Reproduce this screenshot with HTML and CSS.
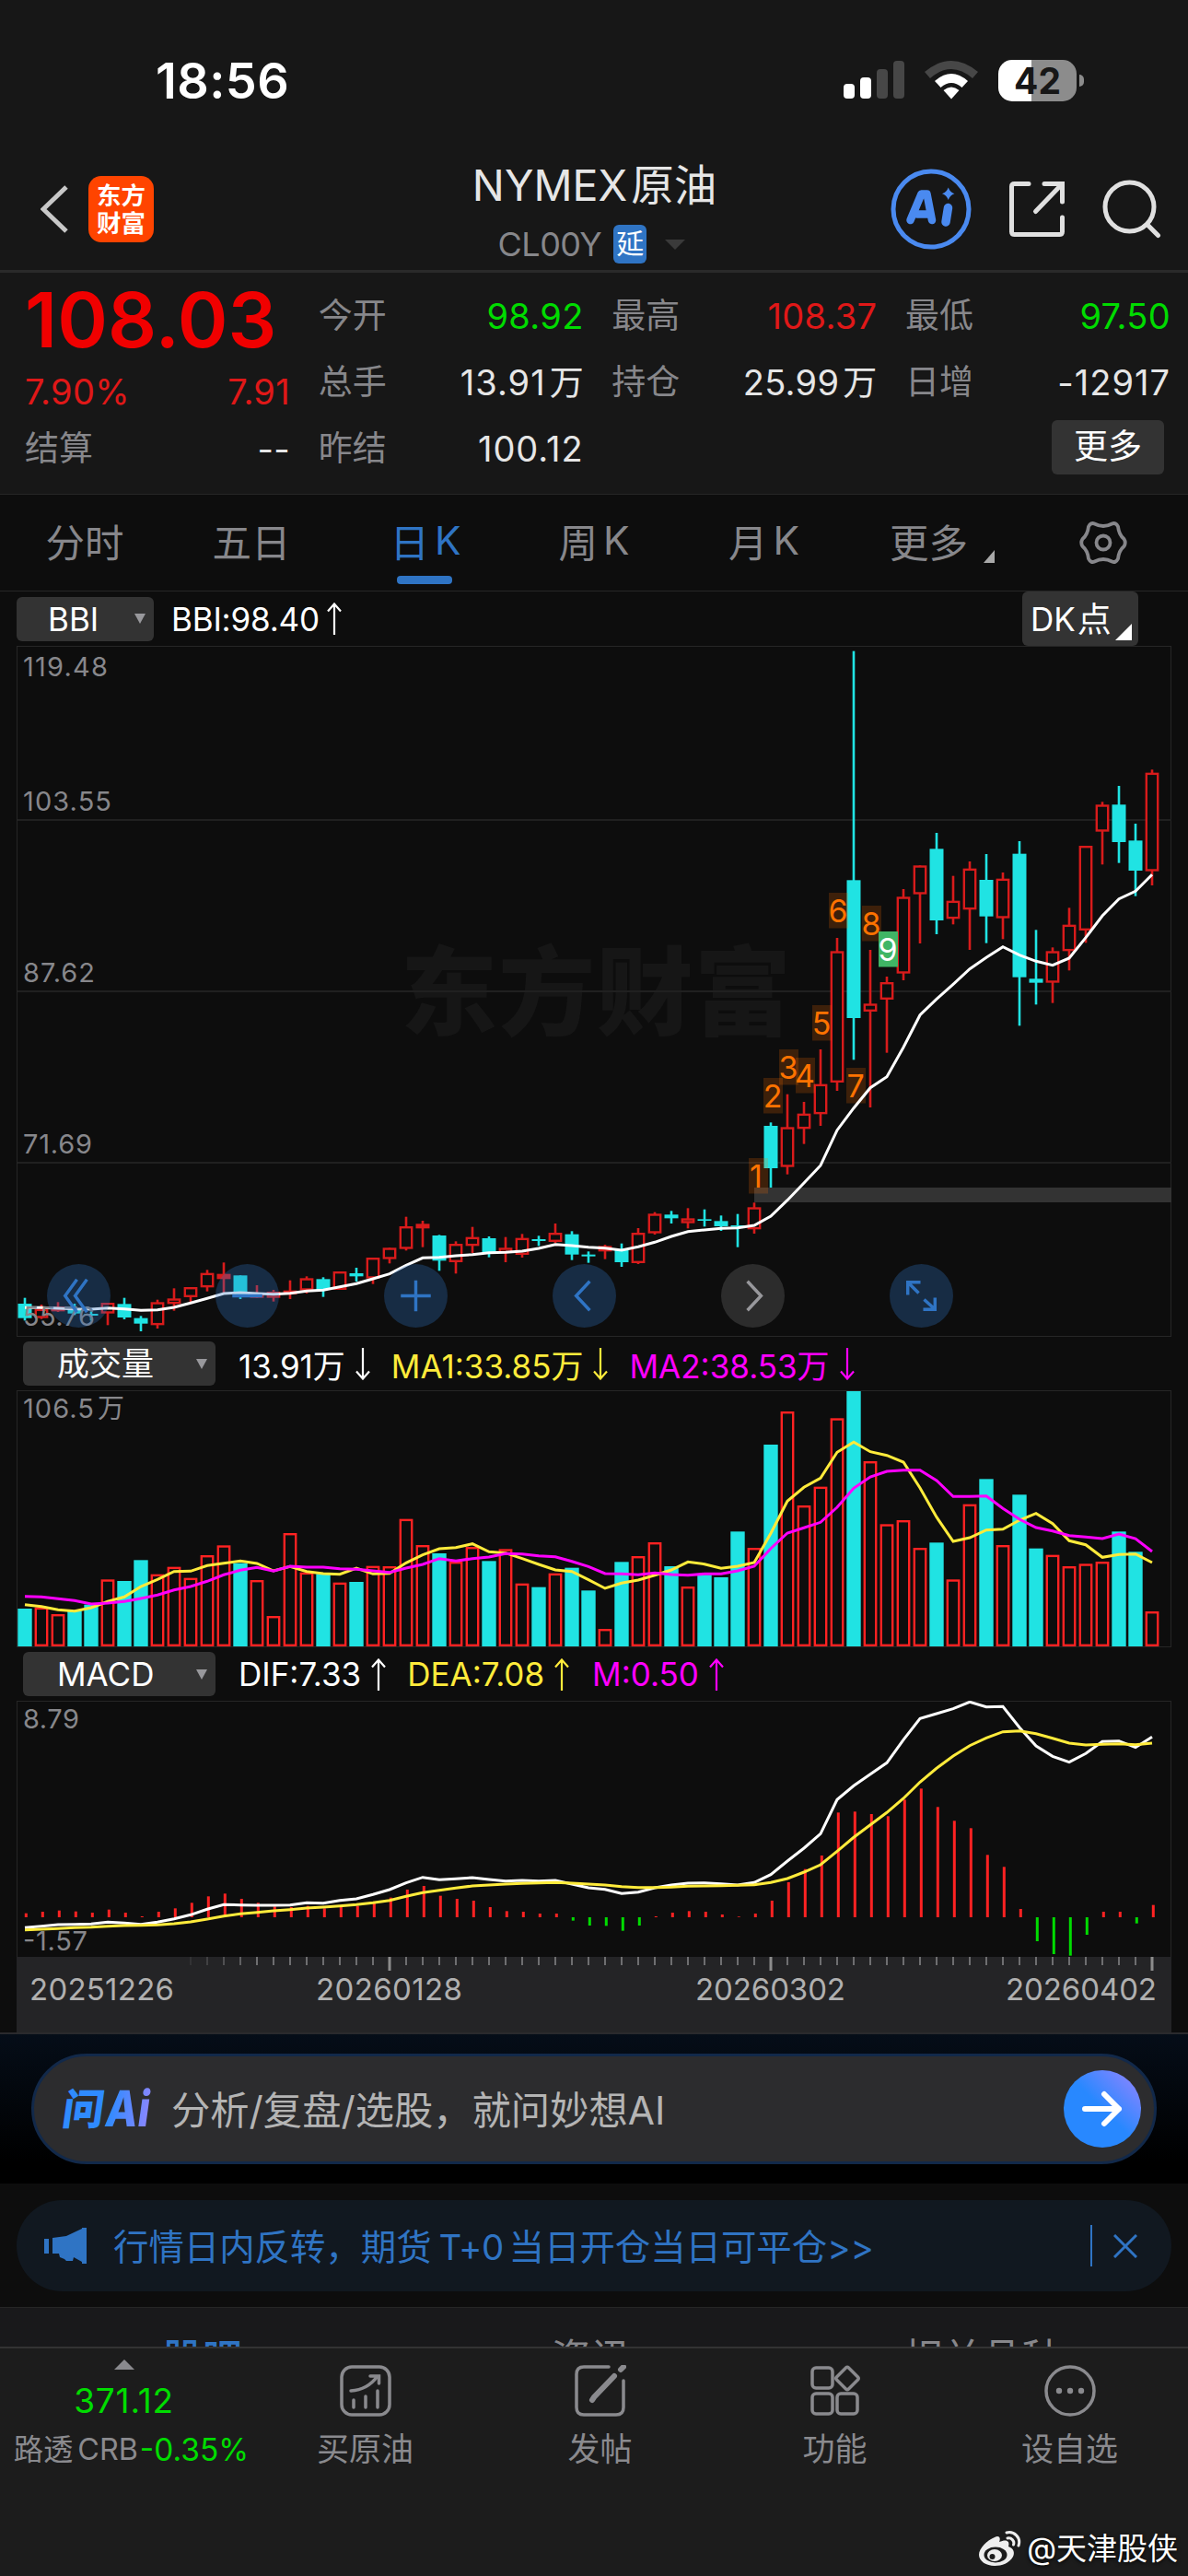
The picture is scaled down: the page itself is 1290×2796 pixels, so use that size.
FILE: index.html
```html
<!DOCTYPE html>
<html lang="zh-CN">
<head>
<meta charset="utf-8">
<title>NYMEX原油</title>
<link rel="stylesheet" href="styles.css">
</head>
<body>
<div class="status">
  <span class="clock">18:56</span>
  <span class="status-icons">
    <svg class="signal" width="66" height="42" viewBox="0 0 66 42">
      <rect x="0" y="25" width="12" height="16" rx="4" fill="#fff"/>
      <rect x="18" y="18" width="12" height="23" rx="4" fill="#fff"/>
      <rect x="36" y="9" width="12" height="32" rx="4" fill="#474747"/>
      <rect x="54" y="0" width="12" height="41" rx="4" fill="#474747"/>
    </svg>
    <svg class="wifi" width="58" height="42" viewBox="0 0 58 42">
      <path d="M0 12Q29-12 58 12L52 19Q29-1 6 19Z" fill="#474747"/>
      <path d="M11 22Q29 6 47 22L40.500 29Q29 19 17.500 29Z" fill="#fff"/>
      <path d="M20.500 32Q29 25 37.500 32L29 41.500Z" fill="#fff"/>
    </svg>
    <span class="battery"><b>42</b></span>
    <span class="battery-nub"></span>
  </span>
</div>

<header class="header">
  <div class="header-left">
    <svg width="30" height="52" viewBox="0 0 30 52"><path d="M28 2L3 26L28 50" fill="none" stroke="#c8c8c8" stroke-width="5"/></svg>
    <span class="logo"><span>东方</span><span>财富</span></span>
  </div>
  <div class="header-title">
    <h1>NYMEX<span>原油</span></h1>
    <div class="code"><span class="code-text">CL00Y</span><span class="delay">延</span><i class="caret"></i></div>
  </div>
  <div class="header-right">
    <svg width="88" height="88" viewBox="0 0 88 88">
      <circle cx="44" cy="44" r="41" fill="none" stroke="#4a8af0" stroke-width="5"/>
      <path d="M21.500 56L33.500 27.500H39.500L45 56M29 49.500H42" fill="none" stroke="#4a8af0" stroke-width="8.500" stroke-linejoin="round" stroke-linecap="round"/>
      <path d="M62.500 42.500L60 58" stroke="#4a8af0" stroke-width="9.500" stroke-linecap="round"/>
      <path d="M62.700 20.500Q64.500 25.500 69.500 27.300Q64.500 29 62.700 34Q61 29 56 27.300Q61 25.500 62.700 20.500Z" fill="#4a8af0"/>
    </svg>
    <svg width="62" height="62" viewBox="0 0 62 62" fill="none" stroke="#e0e0e0" stroke-width="5" stroke-linecap="round">
      <path d="M22 3.500H6.500Q3.500 3.500 3.500 6.500V55.500Q3.500 58.500 6.500 58.500H55.500Q58.500 58.500 58.500 55.500V40"/>
      <path d="M39 3.500H58.500V23M57 5L29.500 33.500"/>
    </svg>
    <svg width="64" height="64" viewBox="0 0 64 64" fill="none" stroke="#e0e0e0" stroke-width="5" stroke-linecap="round">
      <circle cx="29.500" cy="29.500" r="26.500"/><path d="M49 49L60.500 60.500"/>
    </svg>
  </div>
</header>

<section class="quote">
  <div class="col">
    <div class="price">108.03</div>
    <div class="row change"><span>7.90%</span><span>7.91</span></div>
    <div class="row"><label>结算</label><span>--</span></div>
  </div>
  <div class="col">
    <div class="row"><label>今开</label><span class="down">98.92</span></div>
    <div class="row"><label>总手</label><span class="wide">13.91<em>万</em></span></div>
    <div class="row"><label>昨结</label><span class="wide">100.12</span></div>
  </div>
  <div class="col">
    <div class="row"><label>最高</label><span class="up">108.37</span></div>
    <div class="row"><label>持仓</label><span>25.99<em>万</em></span></div>
  </div>
  <div class="col">
    <div class="row"><label>最低</label><span class="down">97.50</span></div>
    <div class="row"><label>日增</label><span class="wide">-12917</span></div>
    <div class="row row-more"><button class="more">更多</button></div>
  </div>
</section>

<nav class="tabs">
  <a>分时</a><a>五日</a><a class="active">日<em>K</em></a><a>周<em>K</em></a><a>月<em>K</em></a><a class="tab-more">更多<i class="corner"></i></a>
  <a class="gear"><svg width="54" height="50" viewBox="-27 -25 54 50" fill="none" stroke="#87878b" stroke-width="3.800">
    <path d="M-9.500-20.500Q0-15.500 9.500-20.500Q13.500-22.500 16-17.500Q17-8.500 22.500-4Q25 0 22.500 4Q17 8.500 16 17.500Q13.500 22.500 9.500 20.500Q0 15.500-9.500 20.500Q-13.500 22.500-16 17.500Q-17 8.500-22.500 4Q-25 0-22.500-4Q-17-8.500-16-17.500Q-13.500-22.500-9.500-20.500Z"/>
    <circle r="7.500"/></svg></a>
</nav>

<section class="indicator first">
  <button class="pick short">BBI<i class="caret"></i></button>
  <span class="val white bbi">BBI:98.40</span><svg class="arr white"><use href="#up"/></svg>
  <button class="dk">DK<span>点</span><i class="corner"></i></button>
</section>
<div class="chart-wrap">
  <svg class="chart" id="k-chart" width="1290" height="750" viewBox="0 701 1290 750"></svg>
  <div class="controls">
    <span><svg viewBox="-35 -35 70 70"><path d="M-2-18L-15 0L-2 18M9-18L-4 0L9 18"/></svg></span>
    <span><svg viewBox="-35 -35 70 70"><path d="M-16.500 0H16.500"/></svg></span>
    <span><svg viewBox="-35 -35 70 70"><path d="M-16.500 0H16.500M0-17V17"/></svg></span>
    <span><svg viewBox="-35 -35 70 70"><path d="M6-16L-9 0L6 16"/></svg></span>
    <span class="off"><svg viewBox="-35 -35 70 70"><path d="M-6-16L9 0L-6 16"/></svg></span>
    <span><svg viewBox="-35 -35 70 70"><path d="M-15-1V-15H-1M-14-14L-3-3M15 2V15H2M14 14L3 4"/></svg></span>
  </div>
</div>

<section class="indicator">
  <button class="pick">成交量<i class="caret"></i></button>
  <span class="val white v1">13.91万</span><svg class="arr white"><use href="#down"/></svg>
  <span class="val yellow v2">MA1:33.85万</span><svg class="arr yellow"><use href="#down"/></svg>
  <span class="val pink v3">MA2:38.53万</span><svg class="arr pink"><use href="#down"/></svg>
</section>
<svg class="chart" id="vol-chart" width="1290" height="279" viewBox="0 1509 1290 279"></svg>

<section class="indicator">
  <button class="pick">MACD<i class="caret"></i></button>
  <span class="val white m1">DIF:7.33</span><svg class="arr white"><use href="#up"/></svg>
  <span class="val yellow m2">DEA:7.08</span><svg class="arr yellow"><use href="#up"/></svg>
  <span class="val pink m3">M:0.50</span><svg class="arr pink"><use href="#up"/></svg>
</section>
<svg class="chart" id="macd-chart" width="1290" height="360" viewBox="0 1846 1290 360"></svg>

<section class="ask">
  <div class="ask-pill">
    <svg class="ask-logo" width="98" height="46" viewBox="0 0 98 46">
      <defs><linearGradient id="ai" gradientUnits="userSpaceOnUse" x1="50" x2="98"><stop offset="0" stop-color="#2f8bff"/><stop offset="1" stop-color="#9086ff"/></linearGradient></defs>
      <g fill="url(#ai)" transform="translate(5.500 0) skewX(-8)">
        <text class="ask-mark" x="0" y="40" font-size="46" textLength="45" lengthAdjust="spacingAndGlyphs">问</text>
        <text class="ask-mark latin" x="47" y="42" font-size="54" textLength="48" lengthAdjust="spacingAndGlyphs">Ai</text>
      </g>
    </svg>
    <span class="ask-text">分析/复盘/选股，就问妙想AI</span>
    <span class="go"><svg width="44" height="40" viewBox="0 0 44 40"><path d="M3 20H40M24 4L40 20L24 36" fill="none" stroke="#fff" stroke-width="6" stroke-linecap="round" stroke-linejoin="round"/></svg></span>
  </div>
</section>

<section class="notice">
  <div class="notice-pill">
    <svg width="46" height="40" viewBox="0 0 46 40" fill="#2f74c4"><path d="M0 12H5V28H0ZM9 11L24 9L41 1V0H46V39H41V37L32 32L31 36H24L22 34L17 32L16 28H9Z"/></svg>
    <span class="notice-text">行情日内反转，期货<span class="t0">T+0</span>当日开仓当日可平仓&gt;&gt;</span>
    <i class="bar"></i>
    <svg width="26" height="26" viewBox="0 0 26 26"><path d="M1 1L25 25M25 1L1 25" stroke="#2f74c4" stroke-width="3"/></svg>
  </div>
</section>

<div class="subtabs"><span class="on">股吧</span><span>资讯</span><span>相关品种</span></div>

<footer class="bottom">
  <div class="bottom-nav">
    <div class="index">
      <i class="tri-up"></i>
      <span class="idx-val">371.12</span>
      <span class="idx-name">路透<em>CRB</em><b>-0.35%</b></span>
    </div>
    <div class="item">
      <svg width="56" height="56" viewBox="0 0 56 56"><rect x="2" y="2" width="52" height="52" rx="11"/><path d="M12 28Q30 27 41 12M33 12H42.500V20M15 38V46M28 34V46M41 28V46"/></svg>
      <span>买原油</span></div>
    <div class="item">
      <svg width="56" height="56" viewBox="0 0 56 56"><path d="M37 2H10Q2 2 2 10V46Q2 54 10 54H45Q53 54 53 46V17"/><path d="M43 12L21 35L19 38" stroke-width="6"/><path d="M50 5L53 2" stroke-width="6"/></svg>
      <span>发帖</span></div>
    <div class="item">
      <svg width="56" height="56" viewBox="0 0 56 56"><rect x="3" y="3" width="22" height="22" rx="4"/><rect x="3" y="31" width="22" height="22" rx="4"/><rect x="30" y="31" width="22" height="22" rx="4"/><path d="M39.500 3Q41 1.500 42.500 3L52.500 13Q54 14.500 52.500 16L42.500 26Q41 27.500 39.500 26L29.500 16Q28 14.500 29.500 13Z"/></svg>
      <span>功能</span></div>
    <div class="item">
      <svg width="56" height="56" viewBox="0 0 56 56"><circle cx="28" cy="28" r="26"/><g fill="#8a8a8e" stroke="none"><circle cx="16" cy="28" r="3.200"/><circle cx="28" cy="28" r="3.200"/><circle cx="40" cy="28" r="3.200"/></g></svg>
      <span>设自选</span></div>
  </div>
  <div class="credit">
    <svg width="46" height="38" viewBox="0 0 46 38">
      <path d="M17 7C22 4 24 8 22 12C29 9 34 10 32 17C38 19 39 24 37 28C33 35 25 38 17 38C8 38 0 33 0 26C0 19 9 10 17 7Z" fill="#eee"/>
      <ellipse cx="18" cy="26" rx="12.500" ry="8.500" fill="#1c1c1c"/><ellipse cx="17" cy="26.500" rx="8" ry="6.500" fill="#eee"/><circle cx="14.500" cy="28" r="3" fill="#1c1c1c"/>
      <path d="M30 2C38 0 46 7 43 16M31 8C35 7 39 11 37.500 15" fill="none" stroke="#eee" stroke-width="3" stroke-linecap="round"/>
    </svg>
    <span>@天津股侠</span>
  </div>
</footer>

<svg width="0" height="0" class="symbols">
  <symbol id="up" viewBox="0 0 16 35"><path d="M8 35V2M1 9.500L8 1.500L15 9.500" fill="none" stroke="currentColor" stroke-width="2.200"/></symbol>
  <symbol id="down" viewBox="0 0 16 35"><path d="M8 0V33M1 25.500L8 33.500L15 25.500" fill="none" stroke="currentColor" stroke-width="2.200"/></symbol>
</svg>
<script src="chart.js"></script>
</body>
</html>
```

FILE: styles.css
```css
* { box-sizing: border-box; }
body {
  margin: 0;
  width: 1290px;
  height: 2796px;
  overflow: hidden;
  display: flex;
  flex-direction: column;
  background: #0d0d0d;
  color: #e6e6e6;
  font-family: Inter, "Noto Sans CJK SC", sans-serif;
}
body > * { flex: none; }
button { font: inherit; border: 0; padding: 0; margin: 0; color: #fff; background: #333; }
em, i { font-style: normal; }
svg { display: block; flex: none; }
.symbols { display: none; }

.status {
  height: 170px;
  background: #171717;
  display: flex;
  justify-content: space-between;
  padding: 58px 113px 0 169px;
}
.clock { height: 60px; line-height: 60px; font-size: 54px; font-weight: 600; color: #fff; letter-spacing: 0.4px; }
.status-icons { display: flex; align-items: center; height: 58px; }
.wifi { margin-left: 22px; }
.battery {
  margin-left: 22px;
  width: 85px;
  height: 45px;
  border-radius: 15px;
  background: linear-gradient(90deg, #fff 42%, #8c8c8c 42%);
  color: #171717;
  font-size: 39px;
  line-height: 45px;
  text-align: center;
}
.battery b { font-weight: 700; }
.battery-nub { width: 5px; height: 13px; margin-left: 3px; border-radius: 0 6px 6px 0; background: #8c8c8c; }

.header {
  height: 126px;
  background: #171717;
  border-bottom: 3px solid #2a2a2a;
  display: grid;
  grid-template-columns: 1fr 300px 1fr;
  padding: 0 29px 0 44px;
}
.header-left { display: flex; align-items: center; gap: 22px; height: 113px; }
.logo {
  width: 71px;
  height: 72px;
  border-radius: 14px;
  background: #ff4400;
  color: #fff;
  display: flex;
  flex-direction: column;
  align-items: center;
  justify-content: center;
  font-size: 26.5px;
  line-height: 30px;
  font-weight: 600;
}
.header-title { text-align: center; margin-left: -7px; margin-right: 7px; }
.header-title h1 { margin: 6px 0 0; font-size: 46.5px; font-weight: 400; line-height: 50px; height: 60px; white-space: nowrap; }
.header-title h1 span { margin-left: 4px; }
.code { display: flex; align-items: center; height: 42px; margin: 8px 0 0 45px; color: #87878b; }
.code-text { font-size: 36px; line-height: 42px; letter-spacing: -0.5px; }
.delay {
  margin-left: 13px;
  width: 36px;
  height: 42px;
  border-radius: 6px;
  background: #2f74c4;
  color: #fff;
  font-size: 30px;
  line-height: 40px;
  text-align: center;
}
.code .caret { margin-left: 20px; border: 11px solid transparent; border-top-color: #3a3a3a; border-bottom: 0; }
.header-right { display: flex; align-items: center; justify-content: flex-end; height: 113px; gap: 40px; }

.quote {
  height: 241px;
  background: #171717;
  border-bottom: 1px solid #262626;
  padding: 11px 19px 0 27px;
  display: grid;
  grid-template-columns: repeat(4, 288px);
  justify-content: space-between;
}
.col { display: flex; flex-direction: column; }
.row {
  display: flex;
  justify-content: space-between;
  align-items: center;
  height: 72px;
  font-size: 38px;
  line-height: 72px;
  white-space: nowrap;
}
.row span { letter-spacing: 0.3px; }
.row .wide { letter-spacing: 1px; }
.row label { font-size: 37px; color: #87878b; }
.row em { font-size: 37px; margin-left: 4px; letter-spacing: 0; }
.down { color: #00dc00; }
.up { color: #e01818; }
.price { height: 93px; line-height: 81px; font-size: 83px; font-weight: 600; color: #f00000; letter-spacing: 0.1px; }
.row.change { height: 51px; line-height: 51px; color: #e01818; }
.row-more { justify-content: flex-end; padding: 0 7px 4px 0; }
.more { width: 122px; height: 59px; border-radius: 6px; font-size: 37px; line-height: 58px; }

.tabs {
  height: 105px;
  border-bottom: 1px solid #262626;
  display: grid;
  grid-template-columns: 184px 178px 200px 166px 203px 184px 160px;
  color: #87878b;
  font-size: 42.5px;
}
.tabs a { display: flex; align-items: center; justify-content: center; position: relative; padding-bottom: 5px; }
.tabs em { margin-left: 6px; }
.tabs .gear { padding-bottom: 1px; padding-left: 6px; justify-content: flex-start; padding-left: 56px; }
.active { color: #2f74c4; }
.active::after {
  content: "";
  position: absolute;
  left: 69px;
  bottom: 7px;
  width: 60px;
  height: 9px;
  border-radius: 4px;
  background: #2f74c4;
}
.corner { border-style: solid; border-width: 0 0 14px 12px; border-color: transparent transparent #a8a8a8; }
.tab-more .corner { margin: 34px 0 0 17px; }

.indicator { height: 58px; padding-left: 25px; display: flex; align-items: center; font-size: 35px; white-space: nowrap; }
.indicator.first { height: 59px; padding-left: 18px; }
.pick {
  width: 209px;
  height: 48px;
  line-height: 48px;
  border-radius: 6px;
  display: flex;
  align-items: center;
  justify-content: space-between;
  padding: 0 9px 0 37px;
}
.pick.short { width: 149px; padding-left: 34px; }
.pick .caret { border: 6.5px solid transparent; border-top: 11px solid #98989c; border-bottom: 0; }
.white { color: #fff; }
.yellow { color: #ffeb3b; }
.pink { color: #ff00ff; }
.val { margin-left: 23px; }
.v1, .m1 { margin-left: 25px; }
.m3 { margin-left: 25px; }
.bbi { margin-left: 19px; letter-spacing: -0.2px; }
.arr { width: 16px; height: 35px; margin-left: 11px; }
.bbi + .arr { margin-left: 8px; }
.dk {
  width: 126px;
  height: 59px;
  border-radius: 6px;
  margin-left: auto;
  margin-right: 54px;
  display: flex;
  align-items: center;
  padding-left: 9px;
}
.dk span { margin: -3px 0 0 2px; font-size: 37px; }
.dk .corner { border-width: 0 0 18px 18px; border-bottom-color: #fff; margin: 29px 0 0 4px; }

.chart-wrap { position: relative; }
.controls { position: absolute; left: 51px; top: 671px; display: flex; gap: 114px; }
.controls span { width: 69px; height: 69px; border-radius: 50%; background: rgba(47, 116, 196, .3); }
.controls svg { width: 69px; height: 69px; fill: none; stroke: #2f74c4; stroke-width: 3.5; }
.controls .off { background: #2c2c2c; }
.controls .off svg { stroke: #98989c; }
.axis { font-size: 29px; fill: #87878b; }
.date { font-size: 33px; fill: #b0b0b0; }
.sig { font-size: 34px; text-anchor: middle; }
.mark { font-size: 105px; font-weight: 900; fill: #161616; }

.ask {
  height: 164px;
  border-top: 2px solid #2a2a2d;
  background: linear-gradient(#050d18, #000 85%);
  padding: 21px 34px 0;
}
.ask-pill {
  height: 120px;
  border: 3px solid #12294a;
  border-radius: 60px;
  background: #2c2c2e;
  display: flex;
  align-items: center;
  padding: 0 14px 0 29px;
}
.ask-mark { font-weight: 900; }
.ask-mark.latin { font-weight: 800; }
.ask-text { flex: 1; margin: -4px 0 0 22px; font-size: 42.3px; color: #b4b4b4; }
.go {
  width: 84px;
  height: 84px;
  border-radius: 50%;
  background: linear-gradient(45deg, #2888ff 50%, #9a84ff);
  display: flex;
  align-items: center;
  justify-content: center;
}

.notice { height: 134px; padding: 18px 18px 0; }
.notice-pill {
  height: 99px;
  border-radius: 50px;
  background: #111820;
  display: flex;
  align-items: center;
  padding: 0 37px 0 30px;
  color: #2f74c4;
}
.notice-text { flex: 1; margin: -4px 0 0 29px; font-size: 38.4px; white-space: nowrap; }
.t0 { margin: 0 6px 0 8px; letter-spacing: -0.5px; }
.bar { width: 2px; height: 45px; margin-right: 23px; background: #2f74c4; }

.subtabs {
  height: 43px;
  border-top: 1px solid #262626;
  background: #19191b;
  overflow: hidden;
  display: grid;
  grid-template-columns: 440px 403px 447px;
  padding-top: 25px;
  font-size: 43px;
  line-height: 58px;
  text-align: center;
  color: #87878b;
}
.subtabs .on { color: #2f74c4; font-weight: 500; }

.bottom { flex: 1 0 0; border-top: 2px solid #333; background: #1c1c1c; display: flex; flex-direction: column; justify-content: space-between; }
.bottom-nav { display: grid; grid-template-columns: 269px repeat(4, 255px); }
.index { display: flex; flex-direction: column; align-items: center; padding-top: 12px; white-space: nowrap; }
.tri-up { border: 11px solid transparent; border-bottom-color: #8a8a8e; border-top: 0; }
.idx-val { margin-top: 10px; font-size: 37px; line-height: 48px; color: #00dc00; letter-spacing: 0.8px; }
.idx-name { margin: 9px 0 0 16px; font-size: 32.3px; line-height: 40px; color: #8a8a8e; display: flex; align-items: center; }
.idx-name b { font-weight: 400; font-size: 33.5px; color: #00dc00; margin-left: 2px; }
.idx-name em { margin-left: 5px; }
.item { display: flex; flex-direction: column; align-items: center; padding-top: 18px; font-size: 35px; line-height: 40px; color: #8a8a8e; }
.item svg { fill: none; stroke: #8a8a8e; stroke-width: 3.5; stroke-linecap: round; }
.item span { margin-top: 15px; }
.credit { display: flex; justify-content: flex-end; align-items: center; gap: 6px; padding: 0 11px 10px 0; font-size: 33px; line-height: 40px; color: #fff; text-shadow: 0 1px 4px #000; }
```

FILE: chart.js
```js
const N = 69;
const X = i => 27 + 18 * i;
const UP = '#d81b1b', DOWN = '#20e3e3';

// Each candle: kind (r hollow, f filled red, c cyan), body top/bottom, wick top/bottom, in thirds of a pixel from y = 1180.
const candles = `c705,752,686,760 r722,752,708,755 f715,730,700,732 c722,737,705,742 c738,744,730,760 r702,737,702,775
c706,750,686,756 c752,770,745,795 r700,775,692,786 r688,706,655,728 r651,684,651,700 r605,652,595,665
f608,625,571,672 c613,682,613,690 f676,686,645,686 r666,686,660,698 r662,675,629,690 r622,662,616,672
c625,660,619,683 r600,660,600,660 c606,616,588,633 r555,623,555,641 r523,560,523,574 r453,527,422,532
f445,460,435,521 c483,565,481,598 r510,570,502,607 r488,517,455,540 c492,538,486,554 r523,540,488,570
r491,546,478,555 c495,501,484,517 r474,504,444,507 c479,545,469,563 c545,551,535,572 r517,535,513,560
c528,570,509,585 r474,573,459,576 r412,476,407,480 c415,427,403,444 r427,443,394,460 c430,435,398,454
c436,453,418,468 c450,455,413,521 r391,463,376,477 c126,264,115,327 r130,260,23,284 r86,136,48,185
r-10,88,-123,126 r-443,-15,-486,12 c-674,-225,-1420,-89 r-272,-246,-447,66 r-342,-285,-360,-112 r-620,-370,-645,-348
r-722,-628,-722,-468 c-776,-543,-828,-498 r-607,-548,-688,-530 r-712,-578,-735,-447 c-675,-556,-759,-469 r-679,-550,-699,-482
c-760,-358,-801,-200 c-353,-340,-512,-269 r-443,-340,-455,-274 r-529,-443,-584,-380 r-786,-510,-786,-470 r-920,-832,-929,-725
c-920,-798,-981,-730 c-803,-705,-858,-622 r-1024,-703,-1034,-657`.split(/\s+/);

const bbi = [718,718,720,722,723,719,722,727,725,717,703,688,672,669,672,674,671,664,661,650,640,624,608,580,556,554,549,545,539,538,534,525,512,516,521,524,531,520,505,486,470,465,460,458,450,420,368,312,255,140,68,2,-34,-130,-235,-287,-335,-385,-422,-457,-430,-410,-397,-420,-487,-558,-613,-638,-692];
const vol = [888,884,906,895,875,793,798,730,776,752,788,714,682,740,795,912,642,770,775,803,801,749,750,596,681,708,735,687,733,694,806,818,773,755,829,954,736,717,672,750,816,778,786,637,690,354,246,552,491,268,180,408,613,600,690,673,793,548,466,681,517,692,713,750,742,735,637,703,897];
const ma1 = [875,881,892,896,885,865,850,816,793,767,766,748,740,733,741,765,751,767,774,776,756,775,773,739,713,693,689,677,703,707,725,744,762,767,794,822,805,795,779,762,736,743,757,750,738,643,538,493,463,379,346,377,389,411,495,590,669,657,632,629,600,578,611,667,680,721,712,710,738];
const ma2 = [848,850,856,862,873,870,865,855,844,827,816,799,778,763,754,766,750,753,753,758,760,765,770,756,744,725,733,725,720,709,710,716,719,734,751,774,775,778,772,777,779,775,775,765,750,692,642,625,607,558,496,459,441,437,437,471,523,523,521,562,597,624,635,650,655,660,645,660,702];
const macd = [830,825,821,824,828,818,828,840,825,814,796,775,766,783,796,808,810,806,814,806,806,797,779,753,741,773,783,789,810,823,825,831,831,854,870,871,887,870,840,828,823,825,834,841,831,789,729,686,642,502,499,507,514,460,424,484,529,553,640,679,816,921,963,968,900,825,825,863,803];
const dif = [877,872,867,866,865,859,862,866,859,848,835,817,802,803,804,804,803,796,797,788,783,769,753,731,713,721,718,714,720,725,723,725,723,735,747,752,766,761,747,738,732,731,734,738,730,704,660,618,571,460,415,377,340,265,196,180,164,142,158,157,225,285,319,338,310,271,269,290,256];
const dea = [884,882,880,877,875,872,870,869,868,864,858,849,839,832,827,822,818,813,810,806,802,796,788,775,763,755,748,741,738,735,733,731,730,732,735,738,743,746,746,745,742,741,740,739,737,730,717,696,672,628,583,542,502,456,403,358,318,284,259,239,236,245,260,276,282,280,278,281,276];

const rect = (x, y, w, h, attrs) => `<rect x="${x}" y="${y}" width="${w}" height="${h}" ${attrs}/>`;
const hline = y => rect(19, y, 1253, 2, 'fill="#202020"');
const line = (data, base, color) =>
  `<polyline points="${data.map((v, i) => X(i) + ',' + (base + v / 3).toFixed(1)).join(' ')}" fill="none" stroke="${color}" stroke-width="3"/>`;
const text = (cls, x, y, s, w, extra = '') =>
  `<text class="${cls}" x="${x}" y="${y}" ${w ? `textLength="${w}"` : ''} ${extra}>${s}</text>`;
const frame = (y, h) => rect(18.5, y, 1253, h, 'fill="none" stroke="#262626"');
const hollow = (x, top, bottom, color) => rect(x - 6.2, top + 1.2, 12.4, Math.max(bottom - top - 2.4, 1), `fill="#0d0d0d" stroke="${color}" stroke-width="2.4"`);

// Price chart
let k = frame(701.5, 749) + text('mark', 435, 1115, '东方财富', 424) + hline(889) + hline(1075) + hline(1261);
k += rect(819, 1289, 453, 16, 'fill="#333"');
candles.forEach((c, i) => {
  const [top, bottom, high, low] = c.slice(1).split(',').map(v => 1180 + v / 3);
  const color = c[0] === 'c' ? DOWN : UP, x = X(i);
  k += rect(x - 1.3, high, 2.6, low - high, `fill="${color}"`);
  k += c[0] === 'r' ? hollow(x, top, bottom, color) : rect(x - 7.5, top, 15, bottom - top, `fill="${color}"`);
});
[['1',813,1257],['2',829,1170],['3',846,1139],['4',864,1148],['5',882,1091],['6',900,969],['7',919,1159],['8',936,983],['9',954,1011]].forEach(([s, x, y]) => {
  const nine = s === '9';
  k += rect(x, y, 21, 38.5, nine ? 'fill="#40b565"' : 'fill="#ff6e00" fill-opacity=".2"');
  k += text('sig', x + (s === '1' ? 8 : 10), y + 32, s, 0, `fill="${nine ? '#fff' : '#ff7300'}"`);
});
k += line(bbi, 1180, '#fff');
k += text('axis', 25, 734, '119.48', 92) + text('axis', 25, 880, '103.55', 96) + text('axis', 25, 1066, '87.62', 78)
  + text('axis', 25, 1252, '71.69', 75) + text('axis', 25, 1439, '55.76', 78);
document.getElementById('k-chart').innerHTML = k;

// Volume chart
let v = frame(1509.5, 278) + text('axis', 25, 1539, '106.5', 77) + text('axis', 106, 1539, '万', 0);
vol.forEach((t, i) => {
  const top = 1450 + t / 3;
  v += candles[i][0] === 'c' ? rect(X(i) - 7.7, top, 15.4, 1787 - top, `fill="${DOWN}"`) : hollow(X(i), top, 1787, '#f22');
});
v += line(ma1, 1450, '#ffeb3b') + line(ma2, 1450, '#ff00ff');
document.getElementById('vol-chart').innerHTML = v;

// MACD chart with the date axis below it
let m = frame(1846.5, 300) + text('axis', 25, 1876, '8.79', 61) + text('axis', 25, 2117, '-1.57', 70);
macd.forEach((t, i) => {
  const y = 1800 + t / 3;
  m += rect(X(i) - 0.2, Math.min(y, 2081), 3, Math.abs(2081 - y), `fill="${y < 2081 ? '#f22' : '#00dc00'}"`);
});
m += line(dif, 1800, '#fff') + line(dea, 1800, '#ffeb3b');
m += rect(18, 2124, 1254, 82, 'fill="#242426"');
for (let i = 10; i < N; i++) {
  const tall = i === 22 || i === 45 || i === 68;
  m += rect(X(i) - (tall ? 1.5 : 1), 2124, tall ? 3 : 2, tall ? 15 : 9, `fill="${tall ? '#8c8c8c' : '#6e6e70'}" opacity="${Math.min(1, (i - 9) / 5)}"`);
}
m += text('date', 32, 2171, '20251226', 157) + text('date', 343, 2171, '20260128', 159)
  + text('date', 755, 2171, '20260302', 163) + text('date', 1092, 2171, '20260402', 164);
document.getElementById('macd-chart').innerHTML = m;
```
